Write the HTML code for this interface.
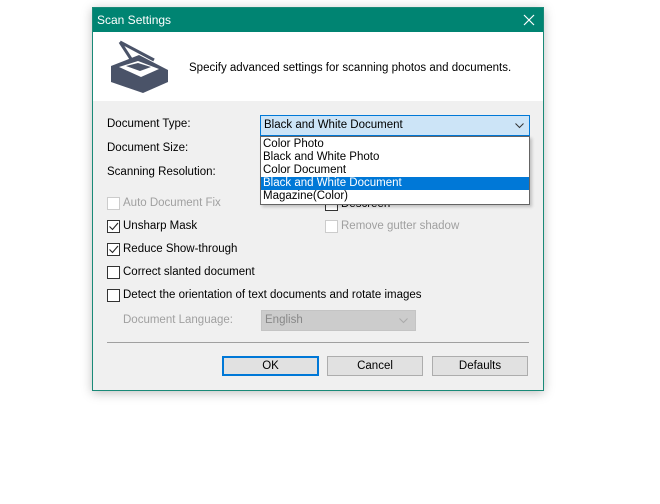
<!DOCTYPE html>
<html><head><style>
body{margin:0;width:660px;height:504px;background:#fff;font-family:"Liberation Sans",sans-serif;font-size:11.5px;color:#000;position:relative;overflow:hidden}
.a{position:absolute;white-space:nowrap}
.win{position:absolute;left:92px;top:7px;width:450px;height:382px;border:1px solid #1a8a78;background:#f0f0f0;box-shadow:0 2px 10px rgba(0,0,0,.25)}
.tb{position:absolute;left:0;top:0;width:450px;height:24px;background:#008472;color:#fff}
.hd{position:absolute;left:0;top:24px;width:450px;height:69px;background:#fff}
.cb{position:absolute;width:11px;height:11px;border:1px solid #333;background:#fff}
.cb.d{border-color:#ccc}
.btn{position:absolute;height:18px;border:1px solid #adadad;background:#e1e1e1;text-align:center;line-height:18px}
.dis{color:#a0a0a0}
.li{position:absolute;left:0;width:266px;height:13px;line-height:13px;padding-left:2px}
</style></head><body>
<div class="win">
 <div class="tb"><span class="a" style="left:4px;top:5px;font-size:12px">Scan Settings</span>
  <svg class="a" style="left:429px;top:5px" width="14" height="14"><path d="M2 2L12 12M12 2L2 12" stroke="#fff" stroke-width="1.2"/></svg></div>
 <div class="hd">
  <svg class="a" style="left:8px;top:4px" width="75" height="62" viewBox="0 0 75 62">
   <path d="M19 6L53 24M19 6L30 23" stroke="#4a5368" stroke-width="3" fill="none"/>
   <path d="M10 30L38 19L67 34L67 46L42 57L10 46Z" fill="#4a5368"/>
   <path d="M18 31L37 25L58 33L40 41Z" fill="#fff"/>
   <path d="M25 30L37 27L50 31L39 35Z" fill="#4a5368"/>
  </svg>
  <span class="a" style="left:96px;top:30px">Specify advanced settings for scanning photos and documents.</span>
 </div>
 <span class="a" style="left:14px;top:110px">Document Type:</span>
 <span class="a" style="left:14px;top:134px">Document Size:</span>
 <span class="a" style="left:14px;top:158px">Scanning Resolution:</span>
 <div class="cb d" style="left:14px;top:189px"></div><span class="a dis" style="left:30px;top:189px">Auto Document Fix</span>
 <div class="cb" style="left:232px;top:190px"></div><span class="a" style="left:248px;top:190px">Descreen</span>
 <div class="cb" style="left:14px;top:212px"><svg width="11" height="11"><path d="M1.5 5.5L4.5 8.5L10 2" stroke="#222" fill="none" stroke-width="1.1"/></svg></div><span class="a" style="left:30px;top:212px">Unsharp Mask</span>
 <div class="cb d" style="left:232px;top:212px"></div><span class="a dis" style="left:248px;top:212px">Remove gutter shadow</span>
 <div class="cb" style="left:14px;top:235px"><svg width="11" height="11"><path d="M1.5 5.5L4.5 8.5L10 2" stroke="#222" fill="none" stroke-width="1.1"/></svg></div><span class="a" style="left:30px;top:235px">Reduce Show-through</span>
 <div class="cb" style="left:14px;top:258px"></div><span class="a" style="left:30px;top:258px">Correct slanted document</span>
 <div class="cb" style="left:14px;top:281px"></div><span class="a" style="left:30px;top:281px">Detect the orientation of text documents and rotate images</span>
 <span class="a dis" style="left:30px;top:306px">Document Language:</span>
 <div class="a" style="left:168px;top:302px;width:153px;height:19px;background:#ccc;border:1px solid #c4c4c4"><span class="a dis" style="left:3px;top:3px;color:#888">English</span>
  <svg class="a" style="left:137px;top:7px" width="9" height="6"><path d="M.5 .5L4.5 4.5L8.5 .5" stroke="#aaa" fill="none"/></svg></div>
 <div class="a" style="left:14px;top:334px;width:422px;height:1px;background:#a0a0a0"></div>
 <div class="btn" style="left:129px;top:348px;width:93px;border:2px solid #0078d7;height:16px;line-height:16px">OK</div>
 <div class="btn" style="left:234px;top:348px;width:94px">Cancel</div>
 <div class="btn" style="left:339px;top:348px;width:94px">Defaults</div>
 <div class="a" style="left:167px;top:107px;width:268px;height:19px;background:#cce4f7;border:1px solid #0078d7"><span class="a" style="left:3px;top:3px">Black and White Document</span>
  <svg class="a" style="left:254px;top:7px" width="9" height="6"><path d="M.5 .5L4.5 4.5L8.5 .5" stroke="#333" fill="none"/></svg></div>
 <div class="a" style="left:167px;top:128px;width:268px;height:67px;background:#fff;border:1px solid #646464;box-shadow:2px 2px 3px rgba(0,0,0,.2)">
  <div class="li" style="top:1px">Color Photo</div>
  <div class="li" style="top:14px">Black and White Photo</div>
  <div class="li" style="top:27px">Color Document</div>
  <div class="li" style="top:40px;background:#0078d7;color:#fff">Black and White Document</div>
  <div class="li" style="top:53px">Magazine(Color)</div>
 </div>
</div>
</body></html>
